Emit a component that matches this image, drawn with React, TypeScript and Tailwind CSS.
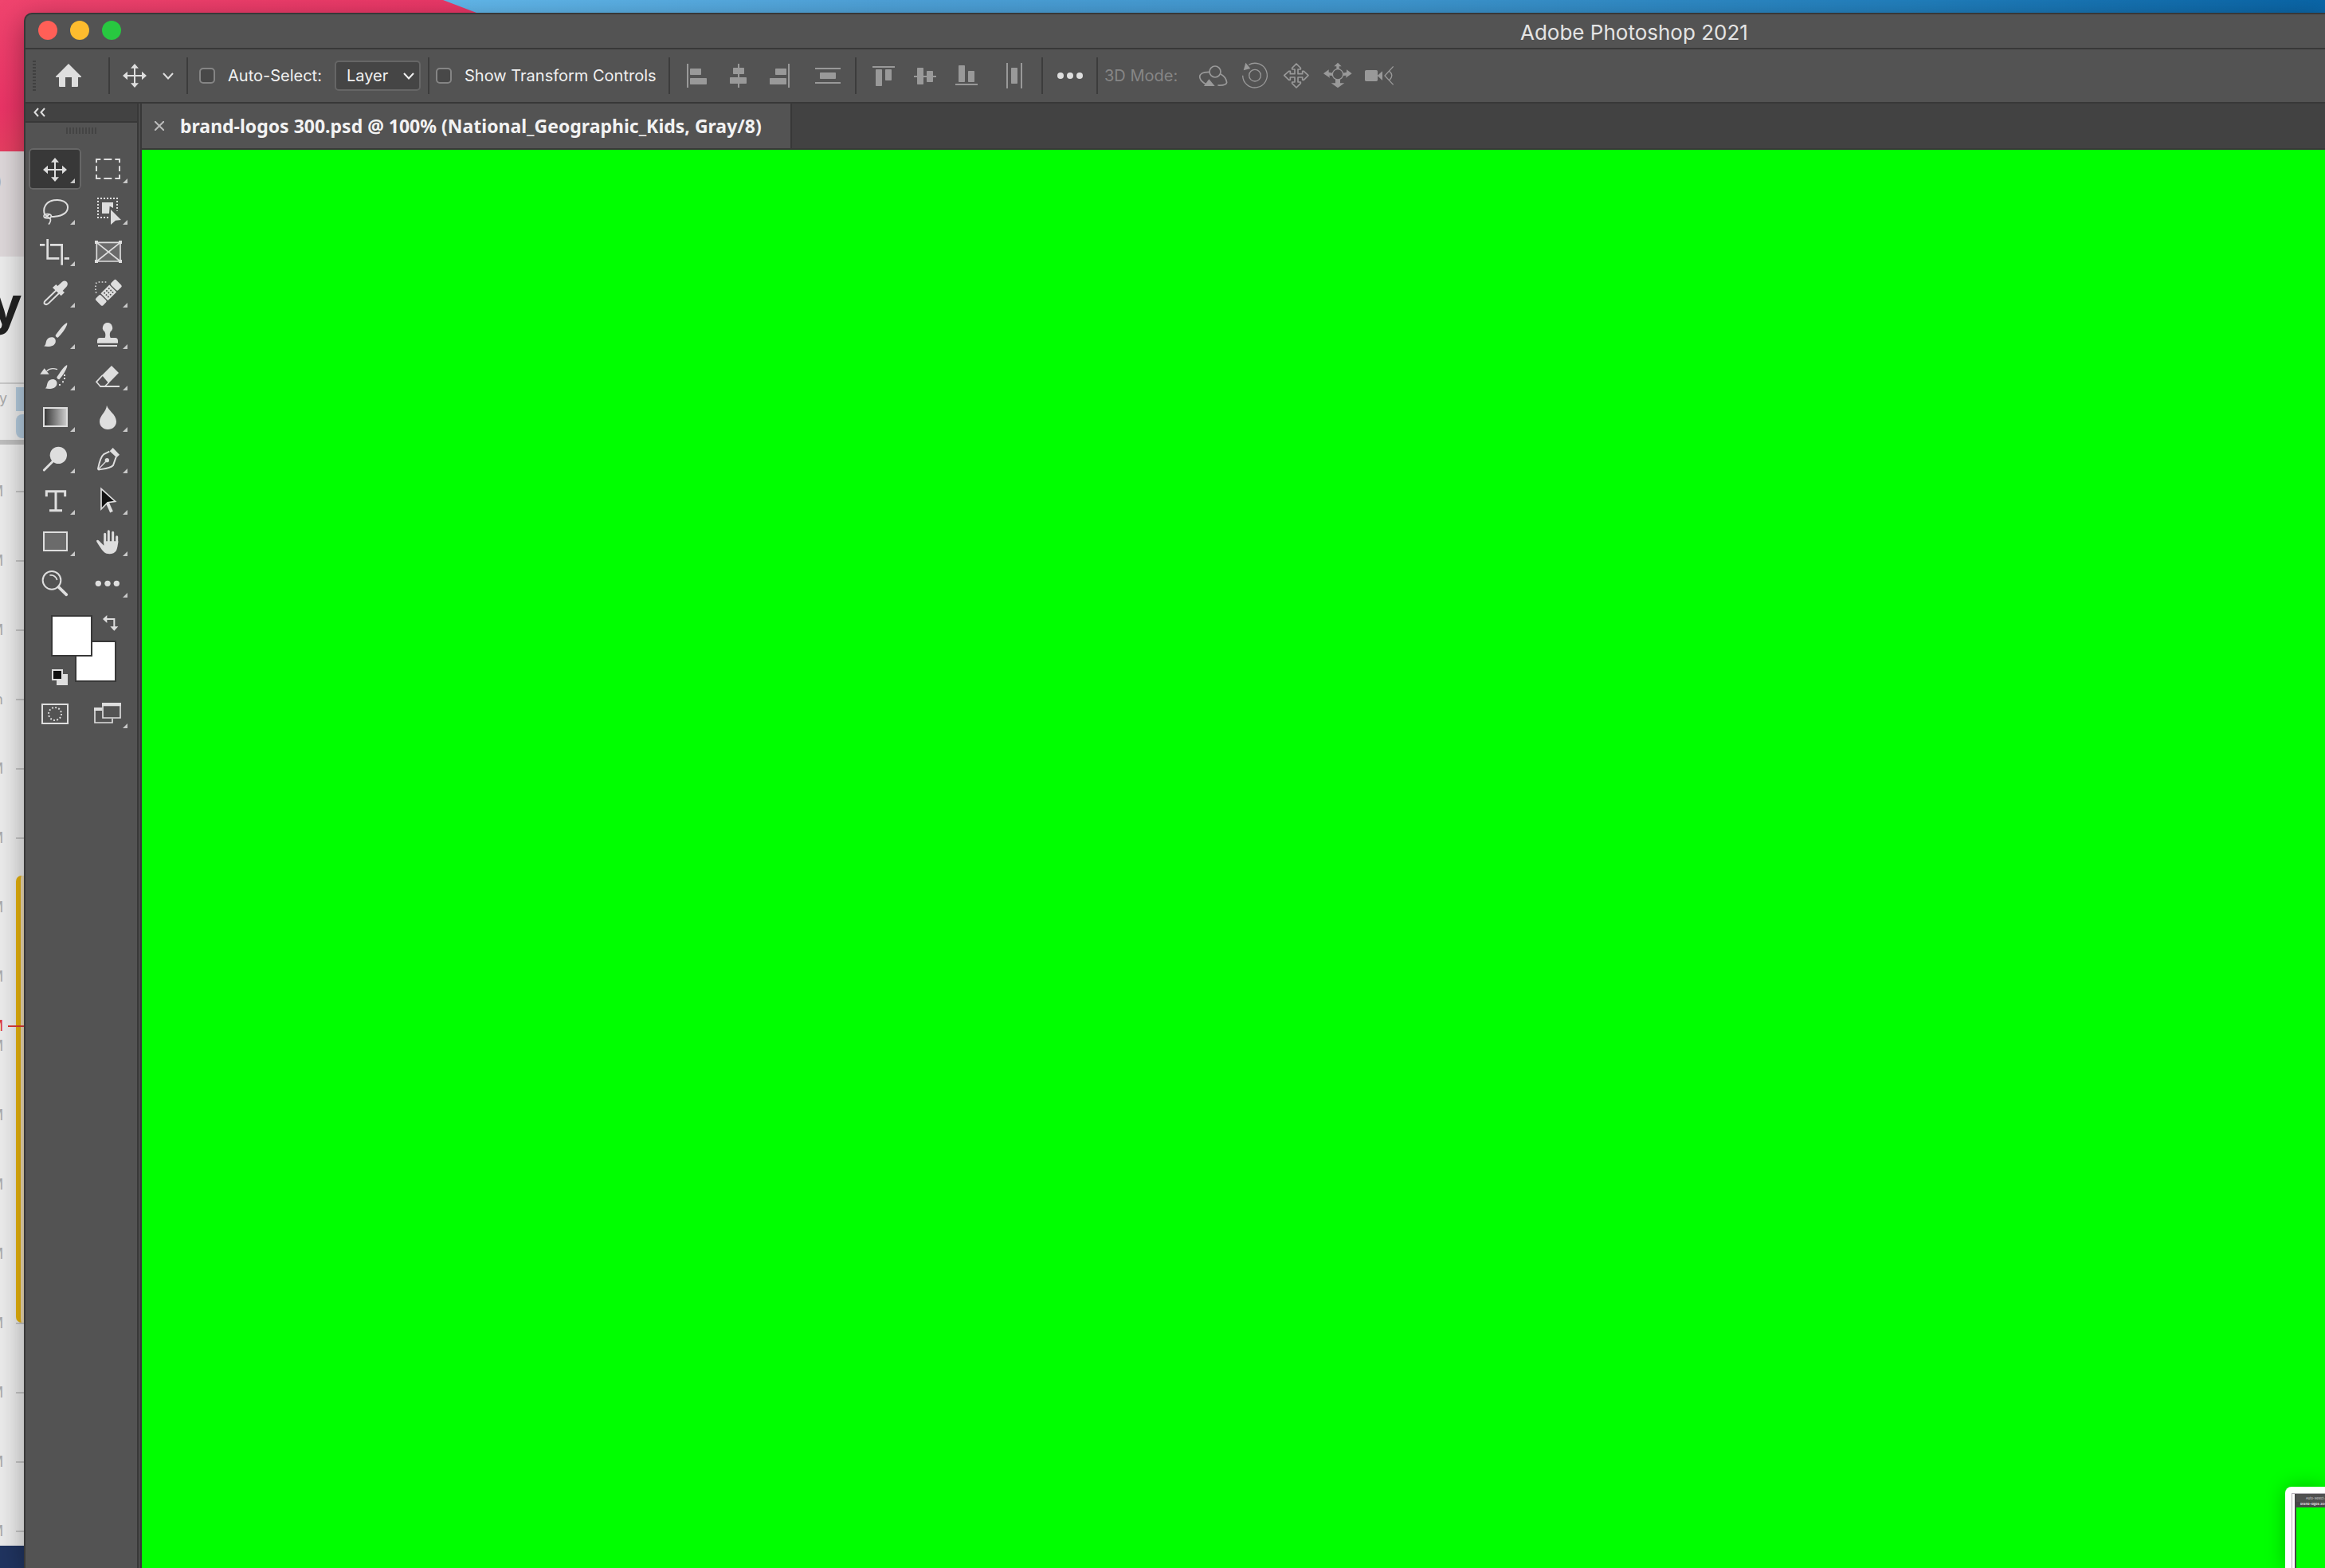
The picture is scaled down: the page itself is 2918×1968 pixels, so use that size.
import type { ReactNode } from "react";

function Wallpaper() {
  return (
    <div className="absolute inset-0 bg-[linear-gradient(90deg,#62b8ec_20%,#4fa3da_38%,#3f97d0_60%,#2280be_82%,#0a66a8_100%)]">
      <div className="h-[190px] w-[640px] bg-[linear-gradient(170deg,#f0446e_0%,#ea3466_45%,#dc5256_100%)] [clip-path:polygon(0_0,556px_0,598px_16px,598px_100%,0_100%)]" />
    </div>
  );
}

const hours = ["M", "M", "M", "n", "M", "M", "M", "M", "M", "M", "M", "M", "M", "M", "M", "M"];

function CalendarEdge() {
  return (
    <aside className="absolute top-[190px] bottom-0 left-0 flex w-[30px] flex-col overflow-hidden bg-[#ececec] font-['Inter',sans-serif] text-[#a9a9a9]">
      <div className="flex h-[132px] items-start bg-[#ded8da] pt-[26px]">
        <span className="-ml-1 text-[18px] leading-6">)</span>
      </div>
      <div className="flex h-[160px] items-start border-b-2 border-[#c9c9c9] pt-[29px]">
        <span className="-ml-3 text-[66px] leading-[64px] font-bold text-[#222]">y</span>
      </div>
      <div className="flex h-[76px] justify-between border-b-[6px] border-[#bebebe] pt-1">
        <span className="-ml-px text-[18px] leading-7">y</span>
        <div className="flex w-[10px] flex-col gap-1">
          <div className="h-[30px] bg-[#b4cbde]" />
          <div className="h-[30px] rounded-l-lg bg-[#b4cbde]" />
        </div>
      </div>
      <div className="flex flex-col pt-[15px]">
        {hours.map((h, i) => (
          <div key={i} className="flex h-[87px] items-center justify-between">
            <span className="-ml-3 w-4 text-right text-[18px] leading-6">{h}</span>
            <span className="h-0.5 w-[10px] bg-[#c6c6c6]" />
          </div>
        ))}
      </div>
      <div className="absolute top-[909px] right-0 h-[561px] w-[10px] rounded-l-[7px] border-l-[6px] border-[#e6b20c] bg-[#eedcb4]" />
      <div className="absolute top-[1086px] left-0 flex w-full items-center justify-between">
        <span className="-ml-3 w-4 text-right text-[18px] leading-6 text-[#dd3a34]">M</span>
        <span className="h-0.5 w-5 bg-[#dd3a34]" />
      </div>
      <div className="absolute bottom-0 left-0 h-7 w-full bg-[#203460]" />
    </aside>
  );
}

const MovePath = () => (
  <path
    d="M204 186V161H192L207 144L222 161H210V186H234V173L252 189L234 205V192H210V217H222L207 234L192 217H204V192H180V205L162 189L180 173V186Z"
    fill="currentColor"
  />
);

type Tool = { name: string; y: number; x: number; menu?: boolean; icon: ReactNode };

const tools: Tool[] = [
  { name: "Move", x: 108, y: 108, menu: true, icon: <MovePath /> },
  {
    name: "Rectangular Marquee", x: 306, y: 108, menu: true,
    icon: <path d="M363 163V150H379M391 150H421M433 150H450V163M450 175V195M450 208V222H433M421 222H391M379 222H363V208M363 195V175" fill="none" stroke="currentColor" strokeWidth="6" />,
  },
  {
    name: "Lasso", x: 108, y: 264, menu: true,
    icon: (
      <g fill="none" stroke="currentColor" strokeWidth="6">
        <path d="M168 357C160 333 173 309 203 304C232 299 254 311 255 329C256 349 238 363 207 365C202 366 196 366 191 365" />
        <ellipse cx="179" cy="364" rx="14" ry="8" strokeWidth="5" />
        <path d="M171 360L190 375C192 383 189 388 183 395M186 357L170 369" strokeWidth="5" />
      </g>
    ),
  },
  {
    name: "Object Selection", x: 306, y: 264, menu: true,
    icon: (
      <>
        <path d="M366 297H444M441 306V344M369 306V373M378 369H411" fill="none" stroke="currentColor" strokeWidth="6" strokeDasharray="6 6" />
        <path d="M384 312H426V333L413 326L411 354H384Z" fill="currentColor" />
        <path d="M417 339L456 378L435 380L417 396Z" fill="currentColor" />
      </>
    ),
  },
  {
    name: "Crop", x: 108, y: 420, menu: true,
    icon: <path d="M150 472H169M179 450V523H223M189 472H233V548M242 523H261" fill="none" stroke="currentColor" strokeWidth="8" />,
  },
  {
    name: "Frame", x: 306, y: 420,
    icon: (
      <>
        <path d="M364 463H453V534H364ZL453 534M453 463L364 534" fill="#6b6b6b" stroke="currentColor" strokeWidth="5" />
        <path d="M357 456h12v12h-12zM447 456h12v12h-12zM357 528h12v12h-12zM447 528h12v12h-12z" fill="currentColor" />
      </>
    ),
  },
  {
    name: "Eyedropper", x: 108, y: 576, menu: true,
    icon: (
      <>
        <path d="M215 640L170 683C160 694 174 701 183 692L226 650" fill="none" stroke="currentColor" strokeWidth="6" />
        <path d="M198 633L211 621L217 627L234 611C248 600 262 616 250 630L236 645L243 651L230 664Z" fill="currentColor" />
      </>
    ),
  },
  {
    name: "Healing Brush", x: 306, y: 576, menu: true,
    icon: (
      <>
        <path d="M400 612H372Q360 612 360 625V648Q362 654 370 655" fill="none" stroke="currentColor" strokeWidth="5" strokeDasharray="5 7" />
        <g transform="rotate(-45 409 652)" fill="currentColor">
          <rect x="355" y="633" width="27" height="38" rx="6" />
          <rect x="386" y="633" width="46" height="38" />
          <rect x="436" y="633" width="27" height="38" rx="6" />
          <g fill="#535353">
            <circle cx="397" cy="642" r="3" /><circle cx="409" cy="642" r="3" /><circle cx="421" cy="642" r="3" />
            <circle cx="397" cy="652" r="3" /><circle cx="409" cy="652" r="3" /><circle cx="421" cy="652" r="3" />
            <circle cx="397" cy="662" r="3" /><circle cx="409" cy="662" r="3" /><circle cx="421" cy="662" r="3" />
          </g>
        </g>
      </>
    ),
  },
  {
    name: "Brush", x: 108, y: 732, menu: true,
    icon: (
      <>
        <path d="M251 766C254 765 253 769 252 773C246 790 234 804 218 821C213 821 208 816 209 812C224 793 235 775 251 766Z" fill="currentColor" />
        <path d="M165 853C174 849 171 840 176 830C182 819 199 817 206 824C212 831 211 845 199 851C189 856 175 856 165 853Z" fill="currentColor" />
      </>
    ),
  },
  {
    name: "Clone Stamp", x: 306, y: 732, menu: true,
    icon: <path d="M405 765A19 19 0 0 1 416 799C412 806 413 817 416 822H434Q444 823 444 833V842H366V833Q366 823 376 822H395C398 817 398 806 394 799A19 19 0 0 1 405 765ZM369 849H441V855H369Z" fill="currentColor" />,
  },
  {
    name: "History Brush", x: 108, y: 138, menu: true,
    icon: (
      <>
        <path d="M251 175C254 174 253 178 252 182C246 199 238 211 223 229C218 229 213 224 214 220C228 201 236 184 251 175Z" fill="currentColor" />
        <path d="M170 262C178 258 175 249 180 239C186 227 203 225 211 233C217 240 216 253 204 260C194 265 180 265 170 262Z" fill="currentColor" />
        <path d="M151 209L167 187L185 209Z" fill="currentColor" />
        <path d="M176 197C187 186 202 186 216 191" fill="none" stroke="currentColor" strokeWidth="4" />
        <path d="M240 210h6v6h-6zM240 222h6v6h-6zM234 235h6v6h-6zM222 246h6v6h-6z" fill="currentColor" />
      </>
    ),
  },
  {
    name: "Eraser", x: 306, y: 138, menu: true,
    icon: (
      <>
        <path d="M420 177L447 204L409 243L384 213Z" fill="currentColor" />
        <path d="M386 213L363 238L378 255H394L410 240" fill="none" stroke="currentColor" strokeWidth="5" />
        <path d="M376 255H450" stroke="currentColor" strokeWidth="6" />
      </>
    ),
  },
  {
    name: "Gradient", x: 108, y: 294, menu: true,
    icon: (
      <>
        <defs>
          <linearGradient id="ramp"><stop offset="0" stopColor="#333" /><stop offset="1" stopColor="#cfcfcf" /></linearGradient>
        </defs>
        <rect x="165" y="336" width="87" height="69" fill="url(#ramp)" stroke="currentColor" strokeWidth="6" />
      </>
    ),
  },
  {
    name: "Blur", x: 306, y: 294, menu: true,
    icon: <path d="M402 326C406 345 438 360 438 387C438 405 424 417 406 417C388 417 375 404 375 387C375 364 400 352 402 326Z" fill="currentColor" />,
  },
  {
    name: "Dodge", x: 108, y: 450, menu: true,
    icon: (
      <>
        <circle cx="220" cy="514" r="32" fill="currentColor" />
        <path d="M202 534L166 570" stroke="currentColor" strokeWidth="9" strokeLinecap="round" />
      </>
    ),
  },
  {
    name: "Pen", x: 306, y: 450, menu: true,
    icon: (
      <>
        <path d="M412 500L391 510C378 520 373 545 369 565Q370 569 374 568C393 565 415 564 426 552L437 521" fill="none" stroke="currentColor" strokeWidth="6" />
        <path d="M425 486L450 512L439 523L413 499Z" fill="currentColor" />
        <path d="M371 566L402 534" stroke="currentColor" strokeWidth="4" />
        <circle cx="403" cy="533" r="8" fill="currentColor" />
      </>
    ),
  },
  {
    name: "Type", x: 108, y: 606, menu: true,
    icon: <path d="M175 670V650H245V670M210 650V722M186 722H234" fill="none" stroke="currentColor" strokeWidth="9" />,
  },
  {
    name: "Path Selection", x: 306, y: 606, menu: true,
    icon: (
      <>
        <path d="M404 692L420 728" stroke="currentColor" strokeWidth="12" />
        <path d="M381 640L434 688L405 692L381 717Z" fill="#111" stroke="currentColor" strokeWidth="5" />
      </>
    ),
  },
  {
    name: "Rectangle", x: 108, y: 762, menu: true,
    icon: <rect x="165" y="804" width="87" height="69" fill="#6b6b6b" stroke="currentColor" strokeWidth="6" />,
  },
  {
    name: "Hand", x: 306, y: 762, menu: true,
    icon: (
      <>
        <path d="M395 842V811M409 840V800M425 840V805M440 845V821" stroke="currentColor" strokeWidth="9" strokeLinecap="round" />
        <path d="M391 838H445C444 852 442 864 438 873C430 888 403 889 392 879C380 868 372 852 364 840C361 834 368 831 373 836L391 854Z" fill="currentColor" />
      </>
    ),
  },
  {
    name: "Zoom", x: 108, y: 168,
    icon: (
      <>
        <circle cx="195" cy="235" r="34" fill="none" stroke="currentColor" strokeWidth="6" />
        <path d="M187 216C201 214 211 222 215 234" fill="none" stroke="currentColor" strokeWidth="5" />
        <path d="M220 260L250 289" stroke="currentColor" strokeWidth="11" strokeLinecap="round" />
      </>
    ),
  },
  {
    name: "Edit Toolbar", x: 306, y: 168, menu: true,
    icon: (
      <g fill="currentColor">
        <circle cx="370" cy="247" r="11" /><circle cx="405" cy="247" r="11" /><circle cx="439" cy="247" r="11" />
      </g>
    ),
  },
];

const screenTools: Tool[] = [
  {
    name: "Quick Mask", x: 108, y: 660,
    icon: (
      <>
        <rect x="159" y="702" width="96" height="72" fill="none" stroke="currentColor" strokeWidth="6" />
        <circle cx="207" cy="738" r="24" fill="none" stroke="currentColor" strokeWidth="6" strokeDasharray="5.6 6.97" />
      </>
    ),
  },
  {
    name: "Screen Mode", x: 306, y: 660, menu: true,
    icon: (
      <>
        <path d="M385 717H357V771H423V756" fill="none" stroke="currentColor" strokeWidth="5" />
        <path d="M354 714H385V726H354ZM384 696H456V709H384Z" fill="currentColor" />
        <path d="M387 700H453V753H387Z" fill="none" stroke="currentColor" strokeWidth="5" />
      </>
    ),
  },
];

function ToolGrid({ items, active }: { items: Tool[]; active?: string }) {
  return (
    <div className="grid grid-cols-2">
      {items.map((t) => (
        <button
          key={t.name}
          type="button"
          aria-label={t.name}
          className={
            t.name === active
              ? "h-[52px] rounded-[5px] bg-[#383838] inset-ring-2 inset-ring-[#666]"
              : "h-[52px] rounded-[5px]"
          }
        >
          <svg viewBox={`${t.x} ${t.y} 198 156`} className="h-[52px] w-[66px]">
            {t.icon}
            {t.menu && <path d={`M${t.x + 174} ${t.y + 114}v18h-18z`} fill="#c8c8c8" />}
          </svg>
        </button>
      ))}
    </div>
  );
}

function ToolPanel() {
  return (
    <aside className="flex w-[142px] shrink-0 flex-col border-r-2 border-[#383838] bg-[#535353] text-[#dedede]">
      <div className="flex h-6 items-center border-b-2 border-[#383838] bg-[#424242] pl-[10px]">
        <button type="button" aria-label="Collapse panel">
          <svg viewBox="0 0 16 12" className="h-3 w-4" fill="none" stroke="currentColor" strokeWidth="2">
            <path d="M6 1L1.500 6L6 11M14 1L9.500 6L14 11" />
          </svg>
        </button>
      </div>
      <div className="flex h-8 justify-center pt-1.5">
        <div className="h-2 w-[38px] bg-[repeating-linear-gradient(90deg,#444_0_2px,#535353_2px_4px)]" />
      </div>
      <div className="px-1">
        <ToolGrid items={tools} active="Move" />
        <div className="relative h-28">
          <button type="button" aria-label="Background color" className="absolute top-[46px] left-[58px] size-[52px] border-2 border-[#383838] bg-white" />
          <button type="button" aria-label="Foreground color" className="absolute top-[14px] left-7 size-[52px] border-2 border-[#383838] bg-white" />
          <button type="button" aria-label="Swap colors" className="absolute top-[14px] left-[93px]">
            <svg viewBox="0 0 60 60" className="size-5">
              <path d="M0 15L16 0V30ZM28 43H58L43 59Z" fill="currentColor" />
              <path d="M12 15H43V46" fill="none" stroke="currentColor" strokeWidth="6" />
            </svg>
          </button>
          <button type="button" aria-label="Default colors" className="absolute top-[82px] left-[29px]">
            <svg viewBox="0 0 60 60" className="size-5">
              <path d="M18 18H60V60H18Z" fill="currentColor" />
              <rect x="3" y="3" width="36" height="36" fill="#111" stroke="currentColor" strokeWidth="6" />
            </svg>
          </button>
        </div>
        <ToolGrid items={screenTools} />
      </div>
    </aside>
  );
}

const Separator = () => <div className="h-[46px] w-0.5 shrink-0 bg-[#3c3c3c]" />;

const Chevron = () => (
  <svg viewBox="0 0 14 9" className="h-[9px] w-[14px]" fill="none" stroke="currentColor" strokeWidth="2">
    <path d="M1 1L7 7.500L13 1" />
  </svg>
);

function BarIcon({ name, x, children }: { name: string; x: number; children: ReactNode }) {
  return (
    <button type="button" aria-label={name} className="w-[52px] shrink-0 text-[#999]">
      <svg viewBox={`${x} 3 156 180`} className="h-[60px] w-[52px]" fill="currentColor">
        {children}
      </svg>
    </button>
  );
}

function Check({ id, children }: { id: string; children: ReactNode }) {
  return (
    <div className="flex shrink-0 items-center gap-4">
      <input id={id} type="checkbox" className="size-5 appearance-none rounded-[5px] border-2 border-[#858585] bg-[#484848]" />
      <label htmlFor={id} className="whitespace-nowrap">{children}</label>
    </div>
  );
}

function OptionsBar() {
  return (
    <div className="flex h-[68px] shrink-0 items-center border-b-2 border-[#383838] text-[20px] leading-7 text-[#f0f0f0]">
      <div className="ml-[9px] h-[38px] w-1 bg-[repeating-linear-gradient(180deg,#404040_0_2px,#535353_2px_4px)]" />
      <button type="button" aria-label="Home" className="mr-3 ml-[3px] flex w-[76px] shrink-0 justify-center text-[#dedede]">
        <svg viewBox="0 0 32 30" className="h-[30px] w-8">
          <path d="M16 0L0 16V17H4V28Q4 29 5 29H12V17H20V29H27Q28 29 28 28V17H32V16Z" fill="currentColor" />
        </svg>
      </button>
      <Separator />
      <button type="button" aria-label="Move tool presets" className="flex shrink-0 items-center gap-5 px-4 text-[#dedede]">
        <svg viewBox="162 144 90 90" className="size-[30px]"><MovePath /></svg>
        <Chevron />
      </button>
      <Separator />
      <div className="ml-[14px] flex w-[170px] shrink-0">
        <Check id="auto-select">Auto-Select:</Check>
      </div>
      <div className="relative mr-[9px] w-[108px] shrink-0">
        <select aria-label="Auto-Select target" className="h-[38px] w-full appearance-none rounded-[5px] border-2 border-[#666] bg-[#454545] pl-[13px]">
          <option>Layer</option>
        </select>
        <div className="pointer-events-none absolute inset-y-0 right-2 flex items-center"><Chevron /></div>
      </div>
      <Separator />
      <div className="ml-2 flex w-[292px] shrink-0">
        <Check id="transform-controls">Show Transform Controls</Check>
      </div>
      <Separator />
      <div className="ml-2 flex">
        <BarIcon name="Align left edges" x={-3}>
          <path d="M36 48h6v90h-6z" /><rect x="48" y="66" width="42" height="24" rx="2" /><rect x="48" y="102" width="63" height="24" rx="2" />
        </BarIcon>
        <BarIcon name="Align horizontal centers" x={153}>
          <path d="M228 48h6v90h-6z" /><rect x="210" y="63" width="42" height="24" rx="2" /><rect x="198" y="99" width="63" height="24" rx="2" />
        </BarIcon>
        <BarIcon name="Align right edges" x={309}>
          <path d="M417 48h6v90h-6z" /><rect x="369" y="66" width="42" height="24" rx="2" /><rect x="348" y="102" width="63" height="24" rx="2" />
        </BarIcon>
      </div>
      <div className="mx-2 flex">
        <BarIcon name="Distribute vertically" x={489}>
          <path d="M519 63h96v6h-96zM519 117h96v6h-96z" /><rect x="537" y="81" width="60" height="24" rx="2" />
        </BarIcon>
      </div>
      <Separator />
      <div className="ml-2 flex">
        <BarIcon name="Align top edges" x={699}>
          <path d="M735 57h84v6h-84z" /><rect x="747" y="69" width="24" height="63" rx="2" /><rect x="783" y="69" width="24" height="42" rx="2" />
        </BarIcon>
        <BarIcon name="Align vertical centers" x={855}>
          <path d="M891 93h84v6h-84z" /><rect x="903" y="63" width="24" height="63" rx="2" /><rect x="939" y="75" width="24" height="42" rx="2" />
        </BarIcon>
        <BarIcon name="Align bottom edges" x={1011}>
          <path d="M1047 123h84v6h-84z" /><rect x="1059" y="54" width="24" height="63" rx="2" /><rect x="1095" y="75" width="24" height="42" rx="2" />
        </BarIcon>
      </div>
      <div className="mx-2 flex">
        <BarIcon name="Distribute horizontally" x={1191}>
          <path d="M1239 45h6v96h-6zM1293 45h6v96h-6z" /><rect x="1257" y="63" width="24" height="60" rx="2" />
        </BarIcon>
      </div>
      <Separator />
      <button type="button" aria-label="More options" className="flex w-[67px] shrink-0 items-center justify-center gap-1 text-[#dedede]">
        <span className="size-2 rounded-full bg-current" />
        <span className="size-2 rounded-full bg-current" />
        <span className="size-2 rounded-full bg-current" />
      </button>
      <Separator />
      <span className="ml-2 w-[111px] shrink-0 whitespace-nowrap text-[#868686]">3D Mode:</span>
      <div className="flex">
        <BarIcon name="Orbit" x={411}>
          <g fill="none" stroke="currentColor" strokeWidth="5">
            <circle cx="495" cy="78" r="21" />
            <path d="M474 79C446 79 434 88 438 102C441 112 449 119 461 125M516 87C530 94 537 107 539 118C538 128 524 130 505 129" />
          </g>
          <path d="M472 106L453 132H494Z" />
        </BarIcon>
        <BarIcon name="Roll" x={567}>
          <g fill="none" stroke="currentColor" strokeWidth="4">
            <circle cx="645" cy="92" r="22" />
            <path d="M599 92A46 46 0 1 0 622 52" />
          </g>
          <path d="M610 44L602 73L628 66Z" />
        </BarIcon>
        <BarIcon name="Pan" x={723}>
          <path
            d="M801 48L817 64V69H807V86H824V76H829L846 92L829 109H824V99H807V117H817V122L801 138L785 122V117H795V99H778V109H773L755 92L773 76H778V86H795V69H785V64Z"
            fill="none" stroke="currentColor" strokeWidth="5" strokeLinejoin="round"
          />
        </BarIcon>
        <BarIcon name="Slide" x={879}>
          <circle cx="957" cy="88" r="20" fill="none" stroke="currentColor" strokeWidth="4" />
          <path d="M957 44L971 58H962V68H952V58H943ZM957 139L932 121H948V108H966V121H982ZM903 85L923 70V80L938 83V93L925 92L927 101ZM1010 85L990 70V80L976 83V93L989 92L987 101Z" />
        </BarIcon>
        <BarIcon name="Zoom camera" x={1035}>
          <rect x="1059" y="72" width="48" height="42" rx="5" />
          <path d="M1106 93L1125 76V111Z" />
          <path d="M1166 58L1134 93L1166 127M1151 76Q1170 92 1151 110" fill="none" stroke="currentColor" strokeWidth="4" />
        </BarIcon>
      </div>
    </div>
  );
}

function DocumentArea() {
  return (
    <main className="flex min-w-0 flex-1 flex-col border-l-2 border-[#383838]">
      <div className="flex h-[58px] shrink-0 border-b-2 border-[#383838] bg-[#424242]">
        <div className="flex items-center gap-5 border-r-2 border-[#383838] bg-[#535353] pr-5 pl-4">
          <button type="button" aria-label="Close document" className="text-[#bbb]">
            <svg viewBox="0 0 12 12" className="size-3" stroke="currentColor" strokeWidth="2"><path d="M0 0L12 12M12 0L0 12" /></svg>
          </button>
          <span className="w-[746px] text-[23px] leading-7 font-bold whitespace-nowrap text-[#f2f2f2] font-['Noto_Sans',sans-serif]">
            brand-logos 300.psd @ 100% (National_Geographic_Kids, Gray/8)
          </span>
        </div>
      </div>
      <div className="flex-1 bg-[#00ff00]" />
    </main>
  );
}

function ScreenshotPreview() {
  return (
    <div className="absolute right-0 bottom-0 flex h-[102px] w-[50px] overflow-hidden rounded-tl-lg bg-white pt-2 pl-2 shadow-[0_0_24px_rgba(0,0,0,0.25)]">
      <div className="flex-1 border-t border-l border-[#b5b0b8] pl-[3px]">
        <div className="flex h-full flex-col border-l-2 border-[#484848] font-['Inter',sans-serif] text-[4px] text-[#ddd]">
          <div className="h-[10px] overflow-hidden bg-[#505050] pl-3 leading-[12px] whitespace-nowrap">Auto-Select: &nbsp;Layer</div>
          <div className="h-[7px] overflow-hidden bg-[#484848] pl-[5px] leading-[6px] font-bold whitespace-nowrap">brand-logos 300.psd @</div>
          <div className="flex-1 bg-[#00ff00]" />
        </div>
      </div>
    </div>
  );
}

export default function App() {
  return (
    <div className="relative h-screen overflow-hidden font-['Inter',sans-serif]">
      <Wallpaper />
      <CalendarEdge />
      <div className="absolute top-4 right-0 bottom-0 left-[30px] flex flex-col overflow-hidden rounded-tl-[10px] border-t-2 border-l-2 border-[#383838] bg-[#535353] shadow-[0_8px_36px_rgba(0,0,0,0.35)]">
        <header className="flex h-11 shrink-0 items-center border-b-2 border-[#383838]">
          <div className="flex gap-4 pb-0.5 pl-4">
            <button type="button" aria-label="Close" className="size-6 rounded-full bg-[#ff5f57]" />
            <button type="button" aria-label="Minimize" className="size-6 rounded-full bg-[#febc2e]" />
            <button type="button" aria-label="Zoom" className="size-6 rounded-full bg-[#28c840]" />
          </div>
          <h1 className="ml-auto w-[1010px] pt-1 text-[26px] leading-8 text-[#e4e4e4]">Adobe Photoshop 2021</h1>
        </header>
        <OptionsBar />
        <div className="flex min-h-0 flex-1 gap-0.5 bg-[#4b4b4b]">
          <ToolPanel />
          <DocumentArea />
        </div>
      </div>
      <ScreenshotPreview />
    </div>
  );
}
